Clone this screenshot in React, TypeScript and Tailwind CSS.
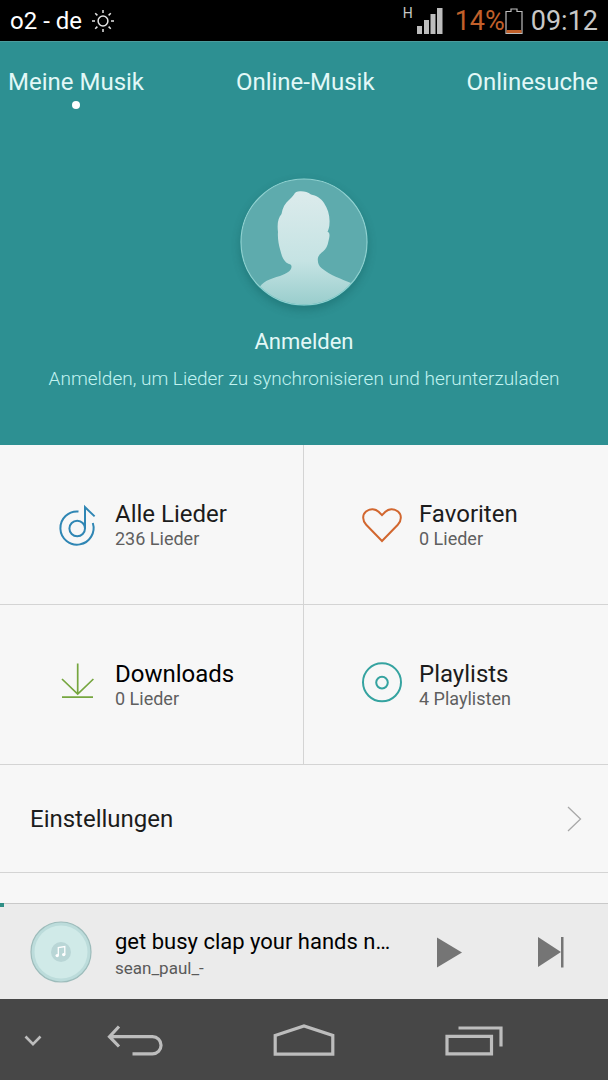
import type { ReactNode } from 'react';

const tabs = ['Meine Musik', 'Online-Musik', 'Onlinesuche'];

function NoteDiscIcon() {
  return (
    <svg
      viewBox="0 0 40 44"
      className="w-10 h-11 text-[#2f86b4]"
      fill="none"
      stroke="currentColor"
      strokeWidth="2"
      aria-hidden="true"
    >
      <path d="M20.5 8.500A16.600 16.600 0 1 0 34.800 20" />
      <circle cx="19.200" cy="25.500" r="7.800" />
      <path d="M27 25.500V4.200L36.600 13.400" />
    </svg>
  );
}

function HeartIcon() {
  return (
    <svg
      viewBox="0 0 40 40"
      className="size-10 text-[#d2672f]"
      fill="none"
      stroke="currentColor"
      strokeWidth="2"
      aria-hidden="true"
    >
      <path d="M20 36L4.200 19.800C.2 15.600 .2 9.800 4 6.600C8 3.100 13.500 3.600 16.600 6.800L20 10.200L23.400 6.800C26.500 3.600 32 3.100 36 6.600C39.800 9.800 39.800 15.600 35.800 19.800Z" />
    </svg>
  );
}

function DownloadIcon() {
  return (
    <svg
      viewBox="0 0 40 46"
      className="w-10 h-[46px] text-[#76a63f]"
      fill="none"
      stroke="currentColor"
      strokeWidth="1.700"
      aria-hidden="true"
    >
      <path d="M19.700 1.500V32M4 17L19.700 32L35.400 17M4 35.200H35" />
    </svg>
  );
}

function DiscIcon() {
  return (
    <svg
      viewBox="0 0 40 46"
      className="w-10 h-[46px] text-[#35a3a0]"
      fill="none"
      stroke="currentColor"
      strokeWidth="2"
      aria-hidden="true"
    >
      <circle cx="20" cy="20.300" r="19" />
      <circle cx="20" cy="20.600" r="5.800" />
    </svg>
  );
}

const library: {
  title: string;
  count: string;
  icon: ReactNode;
  titleClass: string;
}[] = [
  {
    title: 'Alle Lieder',
    count: '236 Lieder',
    icon: <NoteDiscIcon />,
    titleClass: 'text-[#1c1c1c]',
  },
  {
    title: 'Favoriten',
    count: '0 Lieder',
    icon: <HeartIcon />,
    titleClass: 'text-[#1c1c1c]',
  },
  {
    title: 'Downloads',
    count: '0 Lieder',
    icon: <DownloadIcon />,
    titleClass: 'text-black',
  },
  {
    title: 'Playlists',
    count: '4 Playlisten',
    icon: <DiscIcon />,
    titleClass: 'text-[#1c1c1c]',
  },
];

function StatusBar() {
  return (
    <div className="flex items-center justify-between h-[41px] px-[10px] bg-black text-[27px] leading-8">
      <div className="flex items-center gap-[10px] text-[24px] text-white">
        <span>o2 - de</span>
        <svg
          viewBox="0 0 22 22"
          className="size-[22px]"
          fill="none"
          stroke="#e4e4e4"
          strokeWidth="1.500"
          aria-hidden="true"
        >
          <circle cx="11" cy="11" r="4.900" />
          <path d="M11 0V3M11 19V22M0 11H3M19 11H22M3.200 3.200L5.400 5.400M16.600 16.600L18.800 18.800M3.200 18.800L5.400 16.600M16.600 5.400L18.800 3.200" />
        </svg>
      </div>

      <div className="flex items-center">
        <span className="self-start text-[14px] leading-4 text-[#c8c8c8]">
          H
        </span>
        <svg
          viewBox="0 0 26 26"
          className="size-[26px] ml-1"
          fill="#bdbdbd"
          aria-label="Signal"
        >
          <path d="M0 18H5V26H0ZM7 12H12V26H7ZM13.500 6H18.500V26H13.500ZM20 0H25.500V26H20Z" />
        </svg>
        <span className="ml-3 text-[#c2602a]">14%</span>
        <svg
          viewBox="0 0 18 26"
          className="w-[18px] h-[26px]"
          fill="none"
          aria-label="Akku"
        >
          <path
            d="M1 3.500H6V1H12V3.500H17V25.300H1Z"
            stroke="#bdbdbd"
            strokeWidth="1.200"
          />
          <path d="M1.500 22H16.500V25H1.500Z" fill="#c2602a" />
        </svg>
        <span className="ml-2 text-[#c8c8c8]">09:12</span>
      </div>
    </div>
  );
}

function Avatar() {
  return (
    <svg
      viewBox="0 0 128 128"
      className="size-32 rounded-full shadow-[0_4px_8px_rgba(0,60,60,0.25)]"
      aria-hidden="true"
    >
      <defs>
        <linearGradient id="person" x1="0" y1="0" x2="0" y2="1">
          <stop offset="0" stopColor="#dcebec" />
          <stop offset="0.6" stopColor="#c5e3e3" />
          <stop offset="1" stopColor="#96cccb" />
        </linearGradient>
        <clipPath id="avatar-clip">
          <circle cx="64" cy="64" r="62.500" />
        </clipPath>
      </defs>
      <circle cx="64" cy="64" r="63" fill="#5eabad" />
      <path
        clipPath="url(#avatar-clip)"
        fill="url(#person)"
        d="M54 16.500C55 13.500 58 13 61 13.200C65 13.300 68 14 71 16.500C76 17.500 81 20 84 25C88 31 90 38 89.500 45C89.500 49 88.500 51 87.500 54C90.500 54.500 89.500 59 88.500 63C87.500 68 86 71 83 73.500C80 76 77.500 78 77.800 82C78 86 79 88 82 90.500C90 97 101 101 111 105V130H18V112C22 103 30 101 40 98C47 95.500 51 93 51.500 89C51.700 87 50.500 86.500 49 86C44 84 42 79 40.500 73C38.500 66 37.500 60 38 54C37 46 38 40 41.500 36C42.500 30 45 25 49.500 21.500C51 20 52.500 18.500 54 16.500Z"
      />
      <circle
        cx="64"
        cy="64"
        r="63"
        fill="none"
        stroke="#8fd0cf"
        strokeWidth="1.200"
      />
    </svg>
  );
}

function Header() {
  return (
    <header className="min-h-[404px] pt-[26px] bg-[#2d9092] border-t border-[#4b9c9d]">
      <nav className="flex justify-between pl-2 pr-[10px]">
        {tabs.map((tab, index) => (
          <a
            key={tab}
            href={`#${tab.toLowerCase()}`}
            className="flex flex-col items-center text-[24px] leading-7 text-[#e2f8f7]"
          >
            {tab}
            {index === 0 && (
              <span className="mt-[5px] size-2 rounded-full bg-white" />
            )}
          </a>
        ))}
      </nav>

      <button className="flex flex-col items-center w-full mt-[69px]">
        <Avatar />
        <span className="mt-[22px] text-[22px] leading-7 text-[#e2f8f7]">
          Anmelden
        </span>
        <span className="mt-[11px] text-[19px] leading-6 font-light text-[#c2f3f1]">
          Anmelden, um Lieder zu synchronisieren und herunterzuladen
        </span>
      </button>
    </header>
  );
}

function Library() {
  return (
    <section className="grid grid-cols-2">
      {library.map((item) => (
        <a
          key={item.title}
          href={`#${item.title.toLowerCase().replace(' ', '-')}`}
          className="flex items-center gap-[17px] h-40 pl-[58px] border-b border-[#d4d4d4] odd:border-r"
        >
          <span className="shrink-0">{item.icon}</span>
          <span className="flex flex-col">
            <span className={`text-[24px] leading-7 ${item.titleClass}`}>
              {item.title}
            </span>
            <span className="text-[18px] leading-[22px] text-[#5f5f5f]">
              {item.count}
            </span>
          </span>
        </a>
      ))}
    </section>
  );
}

function Player() {
  return (
    <section className="relative flex items-center h-24 pl-[30px] pr-[42px] bg-[#ebebeb] border-t border-[#c9c9c9]">
      {/* Song progress */}
      <div className="absolute -top-px left-0 w-1 h-1 bg-[#2f8f86]" />

      <svg
        viewBox="0 0 62 62"
        className="size-[62px] shrink-0"
        aria-hidden="true"
      >
        <circle
          cx="31"
          cy="31"
          r="30"
          fill="#bcdcdb"
          stroke="#9dbcbb"
          strokeWidth="1.200"
        />
        <circle cx="31" cy="31" r="26.500" fill="#d0eae8" />
        <circle cx="31" cy="31" r="10" fill="#b9d6d6" />
        <path
          d="M28.300 34.500V26.500L34.800 25.600V33.500"
          fill="none"
          stroke="#fff"
          strokeWidth="1.300"
        />
        <circle cx="27.200" cy="34.600" r="1.700" fill="#fff" />
        <circle cx="33.700" cy="33.600" r="1.700" fill="#fff" />
      </svg>

      <div className="flex-1 min-w-0 ml-[23px] pt-1">
        <p className="text-[22px] leading-7 text-black truncate">
          get busy clap your hands n…
        </p>
        <p className="text-[17px] leading-6 text-[#5a5a5a] truncate">
          sean_paul_-
        </p>
      </div>

      <div className="flex items-center gap-[74px] ml-5 text-[#757575]">
        <button aria-label="Wiedergabe">
          <svg viewBox="0 0 28 32" className="w-7 h-8" fill="currentColor">
            <path d="M1 1.500L26 16.500L1 31.500Z" />
          </svg>
        </button>
        <button aria-label="Nächster Titel">
          <svg viewBox="0 0 28 32" className="w-7 h-8" fill="currentColor">
            <path d="M0 1L23 16L0 31Z" />
            <path d="M23 1H25.500V31.500H23Z" />
          </svg>
        </button>
      </div>
    </section>
  );
}

function NavigationBar() {
  return (
    <nav className="grid grid-cols-[50px_1fr_1fr_1fr_50px] items-center justify-items-center h-[81px] pt-0.5 bg-[#474747] text-[#bdbdbd]">
      <button aria-label="Leiste ausblenden" className="pl-4">
        <svg
          viewBox="0 0 20 12"
          className="w-5 h-3"
          fill="none"
          stroke="currentColor"
          strokeWidth="2.600"
        >
          <path d="M2.500 1.500L10 9.200L17.500 1.500" />
        </svg>
      </button>
      <button aria-label="Zurück">
        <svg
          viewBox="0 0 58 34"
          className="w-[58px] h-[34px]"
          fill="none"
          stroke="currentColor"
          strokeWidth="3.200"
        >
          <path d="M13 2.500L3.500 12.700L13 22.500M4 12.700H46.500A8.300 8.300 0 0 1 46.500 29.800H26.500" />
        </svg>
      </button>
      <button aria-label="Startseite">
        <svg
          viewBox="0 0 62 34"
          className="w-[62px] h-[34px]"
          fill="none"
          stroke="currentColor"
          strokeWidth="3.200"
        >
          <path d="M2.200 11.500L31 2L59.800 11.500V30.200H2.200Z" />
        </svg>
      </button>
      <button aria-label="Letzte Apps">
        <svg
          viewBox="0 0 60 34"
          className="w-[60px] h-[34px]"
          fill="none"
          stroke="currentColor"
          strokeWidth="3.200"
        >
          <path d="M4 12.300H48.500V29.800H4ZM15.500 4H58V22.500" />
        </svg>
      </button>
    </nav>
  );
}

export default function App() {
  return (
    <div className="flex flex-col min-h-screen bg-[#f7f7f7] font-['Roboto',sans-serif]">
      <StatusBar />
      <Header />
      <main className="flex-1">
        <Library />
        <a
          href="#einstellungen"
          className="flex items-center justify-between h-27 pl-[30px] pr-[26px] border-b border-[#d4d4d4] text-[24px] leading-7 text-[#1c1c1c]"
        >
          Einstellungen
          <svg
            viewBox="0 0 16 26"
            className="w-4 h-[26px]"
            fill="none"
            stroke="#a8a8a8"
            strokeWidth="1.300"
            aria-hidden="true"
          >
            <path d="M2 1L14.500 13L2 25" />
          </svg>
        </a>
      </main>
      <Player />
      <NavigationBar />
    </div>
  );
}
